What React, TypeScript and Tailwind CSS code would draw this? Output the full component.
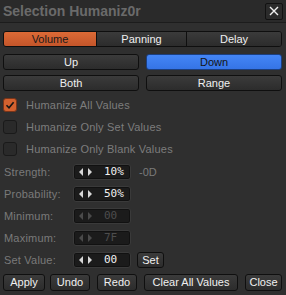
import React from 'react';

const font = { fontFamily: '"Liberation Sans", Arial, sans-serif' };

const btn =
  'flex items-center justify-center h-[16px] rounded-[3px] border border-[#0f0f0f] bg-gradient-to-b from-[#3b3b3b] to-[#2c2c2c] text-[11px] text-[#f0f0f0] leading-none';

const CheckRow: React.FC<{ label: string; checked?: boolean }> = ({ label, checked }) => (
  <div className="flex items-center h-[14px] pl-[3px]">
    <div
      className={`w-[14px] h-[14px] rounded-[3px] border flex items-center justify-center ${
        checked ? 'bg-[#d2612f] border-[#7a3418]' : 'bg-[#2a2a2a] border-[#1a1a1a]'
      }`}
    >
      {checked && (
        <svg width="10" height="10" viewBox="0 0 10 10">
          <path d="M1.5 5.2 L4 7.8 L8.6 2.2" fill="none" stroke="#151515" strokeWidth="1.6" />
        </svg>
      )}
    </div>
    <span className="ml-[9px] text-[11px] tracking-[0.2px] text-[#7d7d7d]">{label}</span>
  </div>
);

const Arrows: React.FC<{ dim?: boolean }> = ({ dim }) => {
  const c = dim ? '#4a4a4a' : '#d8d8d8';
  return (
    <svg width="14" height="8" viewBox="0 0 14 8" className="ml-[5px]">
      <path d="M4 0 L0 4 L4 8 Z" fill={c} />
      <path d="M9 0 L13 4 L9 8 Z" fill={c} />
    </svg>
  );
};

const ValueRow: React.FC<{ label: string; value: string; dim?: boolean; after?: React.ReactNode }> = ({
  label,
  value,
  dim,
  after,
}) => (
  <div className="flex items-center h-[16px]">
    <span className="w-[73px] pl-[4px] text-[11px] tracking-[0.2px] text-[#7a7a7a]">{label}</span>
    <div className="flex items-center w-[58px] h-[16px] rounded-[3px] border border-[#3a3a3a] bg-[#1b1b1b] shadow-[inset_0_0_0_1px_#111]">
      <Arrows dim={dim} />
      <span
        className={`ml-[11px] ${dim ? 'text-[#4d4d4d]' : 'text-[#f2f2f2]'}`}
        style={{ fontFamily: '"DejaVu Sans Mono", monospace', fontSize: 11 }}
      >
        {value}
      </span>
    </div>
    {after}
  </div>
);

export default function App() {
  return (
    <div className="w-[286px] h-[295px] bg-[#2f2f2f] flex flex-col overflow-hidden" style={font}>
      {/* Title bar */}
      <div className="h-[23px] flex items-center justify-between px-[3px] bg-[#2a2a2a] border-b border-[#1c1c1c]">
        <span className="text-[14px] font-bold text-[#6a6a6a]">Selection Humaniz0r</span>
        <div className="w-[18px] h-[17px] flex items-center justify-center border border-[#121212] bg-[#2b2b2b] rounded-[2px]">
          <svg width="10" height="10" viewBox="0 0 10 10">
            <path d="M1 1 L9 9 M9 1 L1 9" stroke="#f0f0f0" strokeWidth="1.4" />
          </svg>
        </div>
      </div>

      <div className="flex flex-col pl-[3px] pr-[4px] pt-[8px]">
        {/* Tabs */}
        <div className="flex h-[16px] rounded-[3px] border border-[#0f0f0f] overflow-hidden text-[11px] leading-none">
          <div className="w-[92px] flex items-center justify-center bg-gradient-to-b from-[#dc6a36] to-[#c4552a] text-[#1a1a1a]">
            Volume
          </div>
          <div className="flex-1 flex items-center justify-center border-l border-[#0f0f0f] bg-gradient-to-b from-[#3b3b3b] to-[#2c2c2c] text-[#f0f0f0]">
            Panning
          </div>
          <div className="w-[95px] flex items-center justify-center border-l border-[#0f0f0f] bg-gradient-to-b from-[#3b3b3b] to-[#2c2c2c] text-[#f0f0f0]">
            Delay
          </div>
        </div>

        <div className="flex gap-[7px] mt-[7px]">
          <div className={`${btn} w-[136px]`}>Up</div>
          <div className="flex-1 flex items-center justify-center h-[16px] rounded-[3px] border border-[#1b3f80] bg-gradient-to-b from-[#4486f6] to-[#3574e6] text-[11px] text-[#141414] leading-none">
            Down
          </div>
        </div>
        <div className="flex gap-[7px] mt-[5px]">
          <div className={`${btn} w-[136px]`}>Both</div>
          <div className={`${btn} flex-1`}>Range</div>
        </div>

        <div className="flex flex-col gap-[8px] mt-[7px] -ml-[3px]">
          <CheckRow label="Humanize All Values" checked />
          <CheckRow label="Humanize Only Set Values" />
          <CheckRow label="Humanize Only Blank Values" />
        </div>

        <div className="flex flex-col gap-[6px] mt-[8px] -ml-[3px]">
          <ValueRow
            label="Strength:"
            value="10%"
            after={<span className="ml-[8px] text-[11px] text-[#7a7a7a]">-0D</span>}
          />
          <ValueRow label="Probability:" value="50%" />
          <ValueRow label="Minimum:" value="00" dim />
          <ValueRow label="Maximum:" value="7F" dim />
          <ValueRow
            label="Set Value:"
            value="00"
            after={<div className={`${btn} w-[27px] ml-[6px]`}>Set</div>}
          />
        </div>

        <div className="flex mt-[6px] gap-[5px]">
          <div className={`${btn} h-[17px] w-[42px]`}>Apply</div>
          <div className={`${btn} h-[17px] w-[40px]`}>Undo</div>
          <div className={`${btn} h-[17px] w-[40px] ml-[2px]`}>Redo</div>
          <div className={`${btn} h-[17px] w-[94px] ml-[2px]`}>Clear All Values</div>
          <div className={`${btn} h-[17px] flex-1 ml-[2px]`}>Close</div>
        </div>
      </div>
    </div>
  );
}
